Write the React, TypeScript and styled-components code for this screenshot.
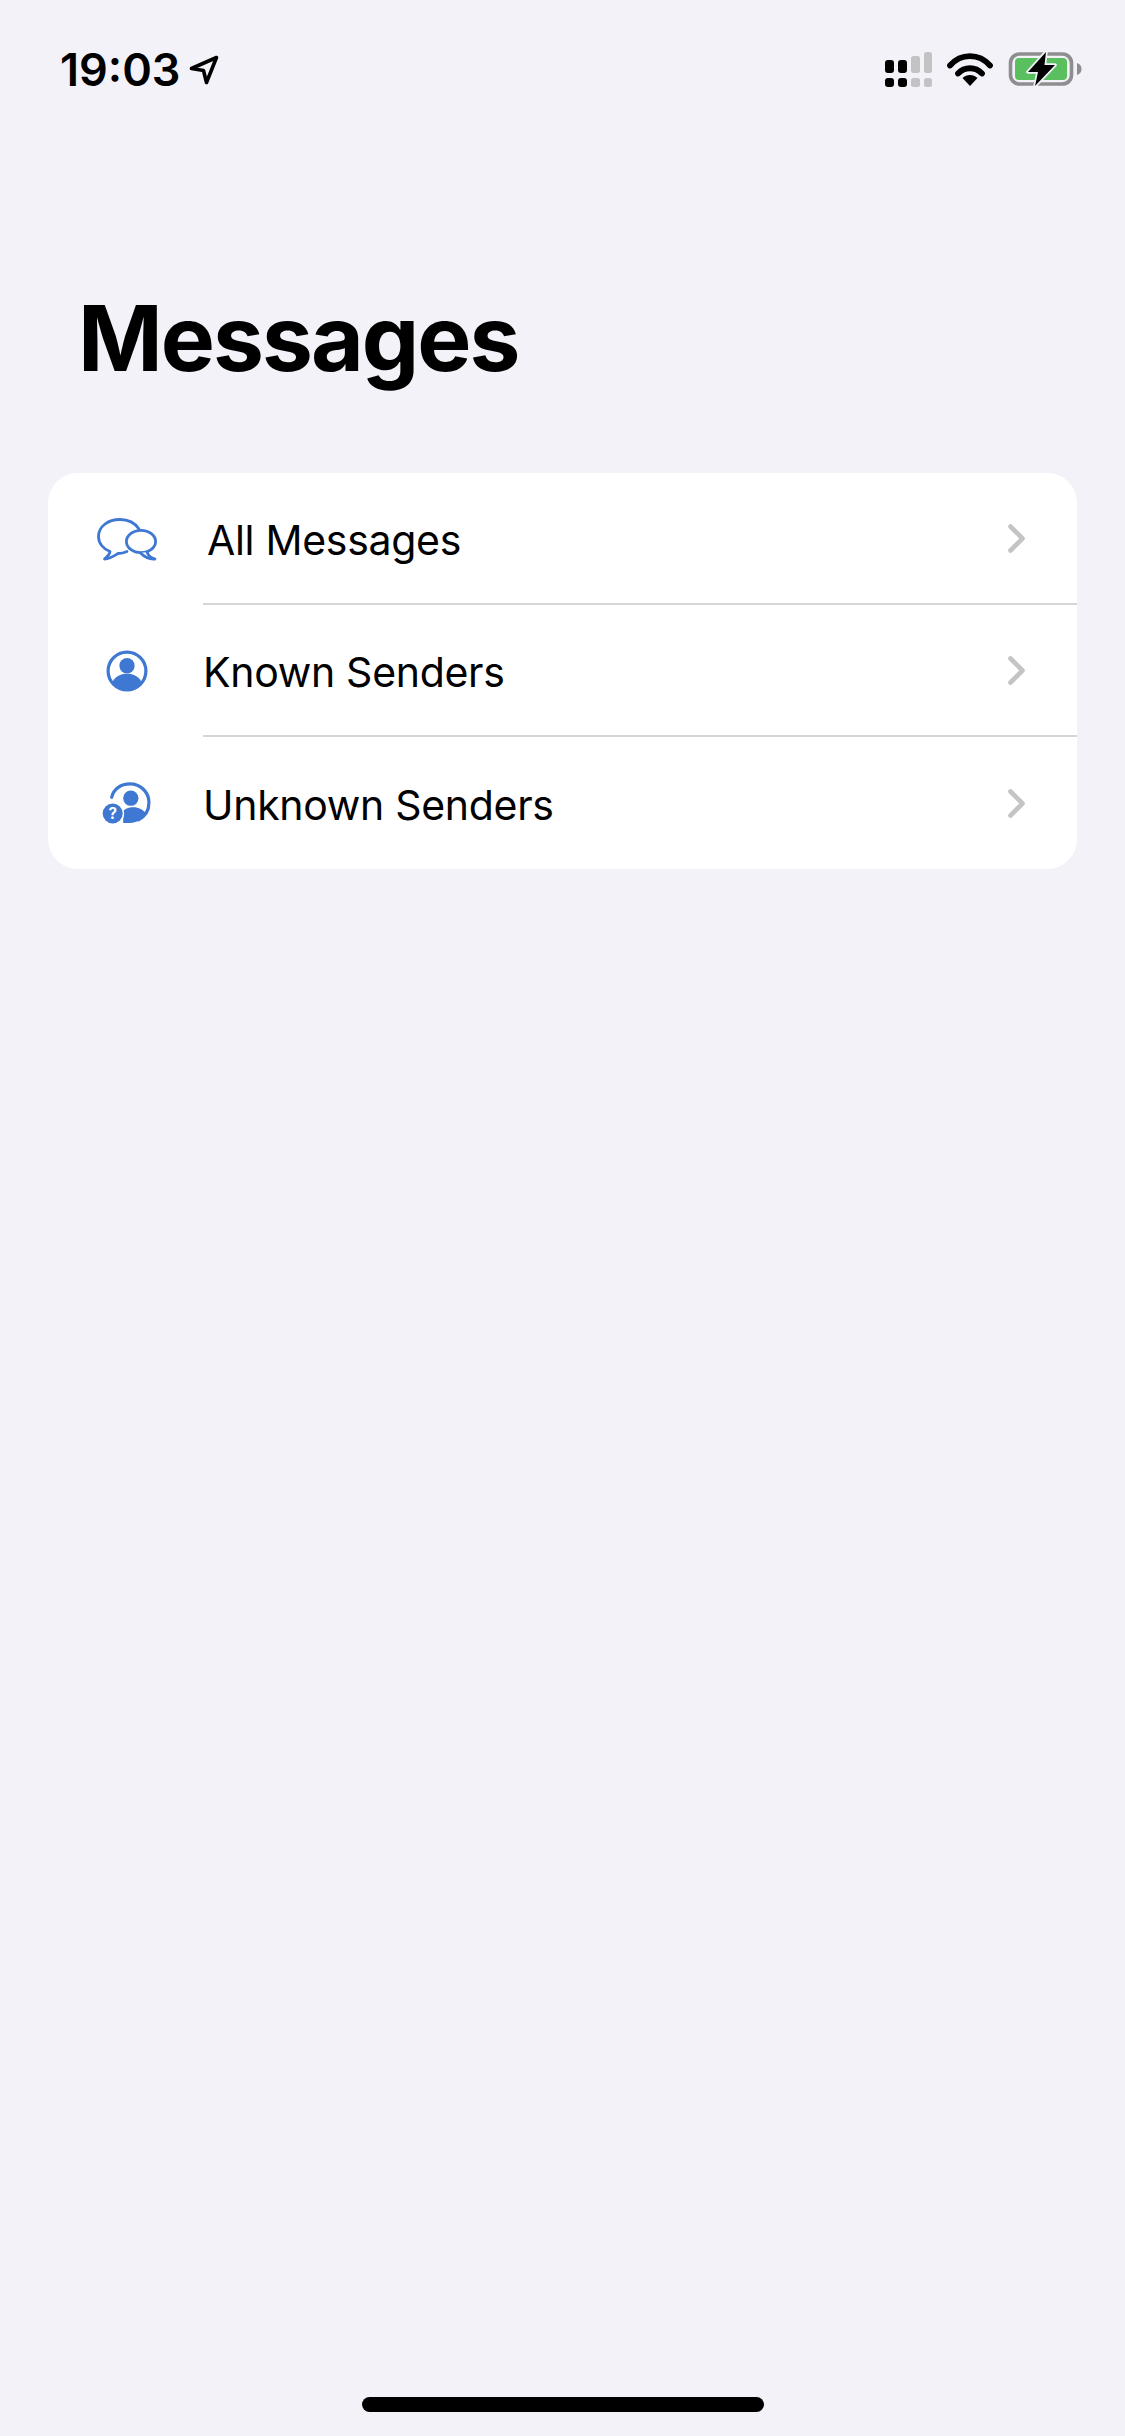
import React from 'react'
import styled, { createGlobalStyle } from 'styled-components'

const Global = createGlobalStyle`
  html, body {
    margin: 0;
    padding: 0;
    background: #f2f2f8;
  }
`

const Screen = styled.div`
  width: 1125px;
  height: 2436px;
  background: #f2f2f8;
  display: flex;
  flex-direction: column;
  font-family: Inter, "Liberation Sans", sans-serif;
  color: #000;
  overflow: hidden;
`

const StatusBar = styled.div`
  height: 52px;
  margin-top: 43px;
  padding: 0 43px 0 60px;
  display: flex;
  align-items: center;
  justify-content: space-between;
`

const Clock = styled.div`
  display: flex;
  align-items: center;
  gap: 9px;
  padding-top: 2px;
  font-size: 45px;
  font-weight: 600;
  line-height: 52px;
`

const StatusIcons = styled.div`
  display: flex;
  align-items: center;
  gap: 15px;
`

const Title = styled.h1`
  margin: 188px 0 0 78px;
  font-size: 91px;
  line-height: 110px;
  font-weight: 700;
  letter-spacing: -2px;
`

const Card = styled.div`
  margin: 80px 48px 0;
  background: #fff;
  border-radius: 30px;
  overflow: hidden;
`

const Row = styled.div`
  height: 132px;
  display: flex;
`

const IconSlot = styled.div`
  width: 155px;
  flex-shrink: 0;
  display: flex;
  align-items: center;
  justify-content: center;
  padding-left: 3px;
  box-sizing: border-box;
`

const RowBody = styled.div<{ $divider: boolean }>`
  flex: 1;
  display: flex;
  align-items: center;
  justify-content: space-between;
  padding-right: 52px;
  box-sizing: border-box;
  border-bottom: ${p => (p.$divider ? '2px solid #d6d6d9' : 'none')};
`

const Label = styled.span<{ $inset?: number }>`
  font-size: 41px;
  font-weight: 400;
  letter-spacing: -0.3px;
  padding-top: 3px;
  padding-left: ${p => p.$inset ?? 0}px;
`

const Chevron = styled.svg`
  display: block;
  width: 17px;
  height: 29px;
`

const HomeIndicator = styled.div`
  margin: auto auto 24px;
  width: 402px;
  height: 15px;
  border-radius: 8px;
  background: #000;
`

const LocationArrow = () => (
  <svg width="30" height="30" viewBox="0 0 30 30" fill="none">
    <path
      d="M2.5 13.5 L27.5 2.5 L17.5 27.5 L14.5 15.5 Z"
      stroke="#000"
      strokeWidth="3.6"
      strokeLinejoin="round"
    />
  </svg>
)

const CellSignal = () => (
  <svg width="47" height="35" viewBox="0 0 47 35">
    <g fill="#000">
      <rect x="0" y="8" width="9" height="13" rx="3" />
      <rect x="13" y="8" width="9" height="13" rx="3" />
      <rect x="0" y="26" width="9" height="9" rx="3" />
      <rect x="13" y="26" width="9" height="9" rx="3" />
    </g>
    <g fill="#c3c3c6">
      <rect x="26" y="4" width="9" height="17" rx="2.5" />
      <rect x="39" y="0" width="8" height="21" rx="2.5" />
      <rect x="26" y="26" width="9" height="9" rx="2.5" />
      <rect x="39" y="26" width="8" height="9" rx="2.5" />
    </g>
  </svg>
)

const Wifi = () => (
  <svg width="46" height="33" viewBox="0 0 46 33" fill="none">
    <path d="M3 12.5 C14 0 32 0 43 12.5" stroke="#000" strokeWidth="5.8" strokeLinecap="round" />
    <path d="M11 20.5 C17.5 13.5 28.5 13.5 35 20.5" stroke="#000" strokeWidth="5.8" strokeLinecap="round" />
    <path d="M15.5 25 C19.5 21 26.5 21 30.5 25 L23 33 Z" fill="#000" />
  </svg>
)

const ChargingBattery = () => (
  <svg width="74" height="36" viewBox="0 0 74 36" fill="none">
    <rect x="2.5" y="3" width="61" height="30" rx="9" stroke="#8e8e90" strokeWidth="3.6" />
    <rect x="7" y="7" width="52" height="22" rx="4" fill="#5ac05f" />
    <path d="M69 12 C72 13 73.5 15 73.5 18 C73.5 21 72 23 69 24 Z" fill="#8e8e90" />
    <path
      d="M38 1 L20 21 L30 21 L27 35 L47 14 L36.5 14 Z"
      fill="#000"
      stroke="#f2f2f8"
      strokeWidth="3.5"
      paintOrder="stroke"
      strokeLinejoin="round"
    />
  </svg>
)

const BubblesIcon = () => (
  <svg width="60" height="43" viewBox="0 0 60 43" fill="none" stroke="#3f78d2" strokeWidth="2.8" strokeLinejoin="round" strokeLinecap="round">
    <path d="M30 33.5 C27 35 24 35.5 21 35.5 C17 38 13 40.8 7.5 41 C10 39 12.5 37 13 33.5 C6 31 1.5 25 1.5 18.5 C1.5 8.5 11 1.5 23 1.5 C31 1.5 38 5 42 11" />
    <ellipse cx="44" cy="23.5" rx="14.6" ry="11.2" fill="#fff" />
    <path d="M50 34 C51 37 54 40 58 41 C53 41.5 47.5 39 43.5 35" fill="#fff" />
  </svg>
)

const PersonIcon = () => (
  <svg width="42" height="42" viewBox="0 0 44 44">
    <circle cx="22" cy="22" r="19.8" fill="none" stroke="#3f78d2" strokeWidth="3.4" />
    <circle cx="22" cy="16.5" r="8" fill="#3f78d2" />
    <path d="M7 33 C11 26.5 17 25 22 25 C27 25 33 26.5 37 33 C33 39 27 42 22 42 C17 42 11 39 7 33 Z" fill="#3f78d2" />
  </svg>
)

const UnknownPersonIcon = () => (
  <svg width="50" height="42" viewBox="0 0 52 44">
    <path
      d="M10 16 C12 7 20 2 29 2 C40 2 49 10.5 49 21.5 C49 29.5 45 36 38 39.5"
      fill="none"
      stroke="#3f78d2"
      strokeWidth="3.4"
      strokeLinecap="round"
    />
    <circle cx="30" cy="17" r="8" fill="#3f78d2" />
    <path d="M22 43 L22 30 C26 27 30 26.5 33 26.5 C38 26.5 43 29 46 33 C42 39 36 43 29 43 Z" fill="#3f78d2" />
    <circle cx="11" cy="33" r="12" fill="#fff" />
    <circle cx="11" cy="33" r="10.5" fill="#3f78d2" />
    <text x="11" y="39" textAnchor="middle" fontSize="16" fontWeight="700" fontFamily="Inter, sans-serif" fill="#fff">
      ?
    </text>
  </svg>
)

const rows = [
  { label: 'All Messages', icon: <BubblesIcon />, inset: 4 },
  { label: 'Known Senders', icon: <PersonIcon /> },
  { label: 'Unknown Senders', icon: <UnknownPersonIcon /> },
]

const App = () => {
  return (
    <Screen>
      <Global />
      <StatusBar>
        <Clock>
          19:03
          <LocationArrow />
        </Clock>
        <StatusIcons>
          <CellSignal />
          <Wifi />
          <ChargingBattery />
        </StatusIcons>
      </StatusBar>
      <Title>Messages</Title>
      <Card>
        {rows.map((row, i) => (
          <Row key={row.label}>
            <IconSlot>{row.icon}</IconSlot>
            <RowBody $divider={i < rows.length - 1}>
              <Label $inset={row.inset}>{row.label}</Label>
              <Chevron viewBox="0 0 17 29" fill="none">
                <path
                  d="M2.5 2.5 L14.5 14.5 L2.5 26.5"
                  stroke="#c4c4c6"
                  strokeWidth="4.6"
                  strokeLinecap="round"
                  strokeLinejoin="round"
                />
              </Chevron>
            </RowBody>
          </Row>
        ))}
      </Card>
      <HomeIndicator />
    </Screen>
  )
}

export default App
